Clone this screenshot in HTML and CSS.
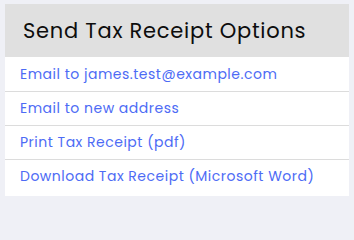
FILE: index.html
```html
<!DOCTYPE html>
<html lang="en">
<head>
<meta charset="utf-8">
<title>Send Tax Receipt Options</title>
<link rel="stylesheet" href="styles.css">
</head>
<body>
<div class="card">
  <div class="card-header">Send Tax Receipt Options</div>
  <ul class="options">
    <li class="option"><a href="#">Email to james.test@example.com</a></li>
    <li class="option"><a href="#">Email to new address</a></li>
    <li class="option"><a href="#">Print Tax Receipt (pdf)</a></li>
    <li class="option"><a href="#">Download Tax Receipt (Microsoft Word)</a></li>
  </ul>
</div>
</body>
</html>
```
FILE: styles.css
```css
html, body {
  margin: 0;
  padding: 0;
}
body {
  background: #eff0f6;
  padding: 4px 5px 5px;
  font-family: "Poppins", "Open Sans", sans-serif;
}
.card {
  background: #ffffff;
  padding-bottom: 3px;
}
.card-header {
  background: #e0e0e0;
  height: 53px;
  display: flex;
  align-items: center;
  padding-left: 18px;
  font-size: 21px;
  color: #0d0d0d;
  letter-spacing: 0.75px;
}
.options {
  list-style: none;
  margin: 0;
  padding: 1px 0 0;
}
.option {
  height: 33px;
  display: flex;
  align-items: center;
  padding-left: 15px;
  border-bottom: 1px solid #dcdcdc;
  font-size: 14px;
}
.option:last-child {
  border-bottom: none;
}
.option a {
  color: #4d6bf5;
  text-decoration: none;
  letter-spacing: 0.5px;
}
```
